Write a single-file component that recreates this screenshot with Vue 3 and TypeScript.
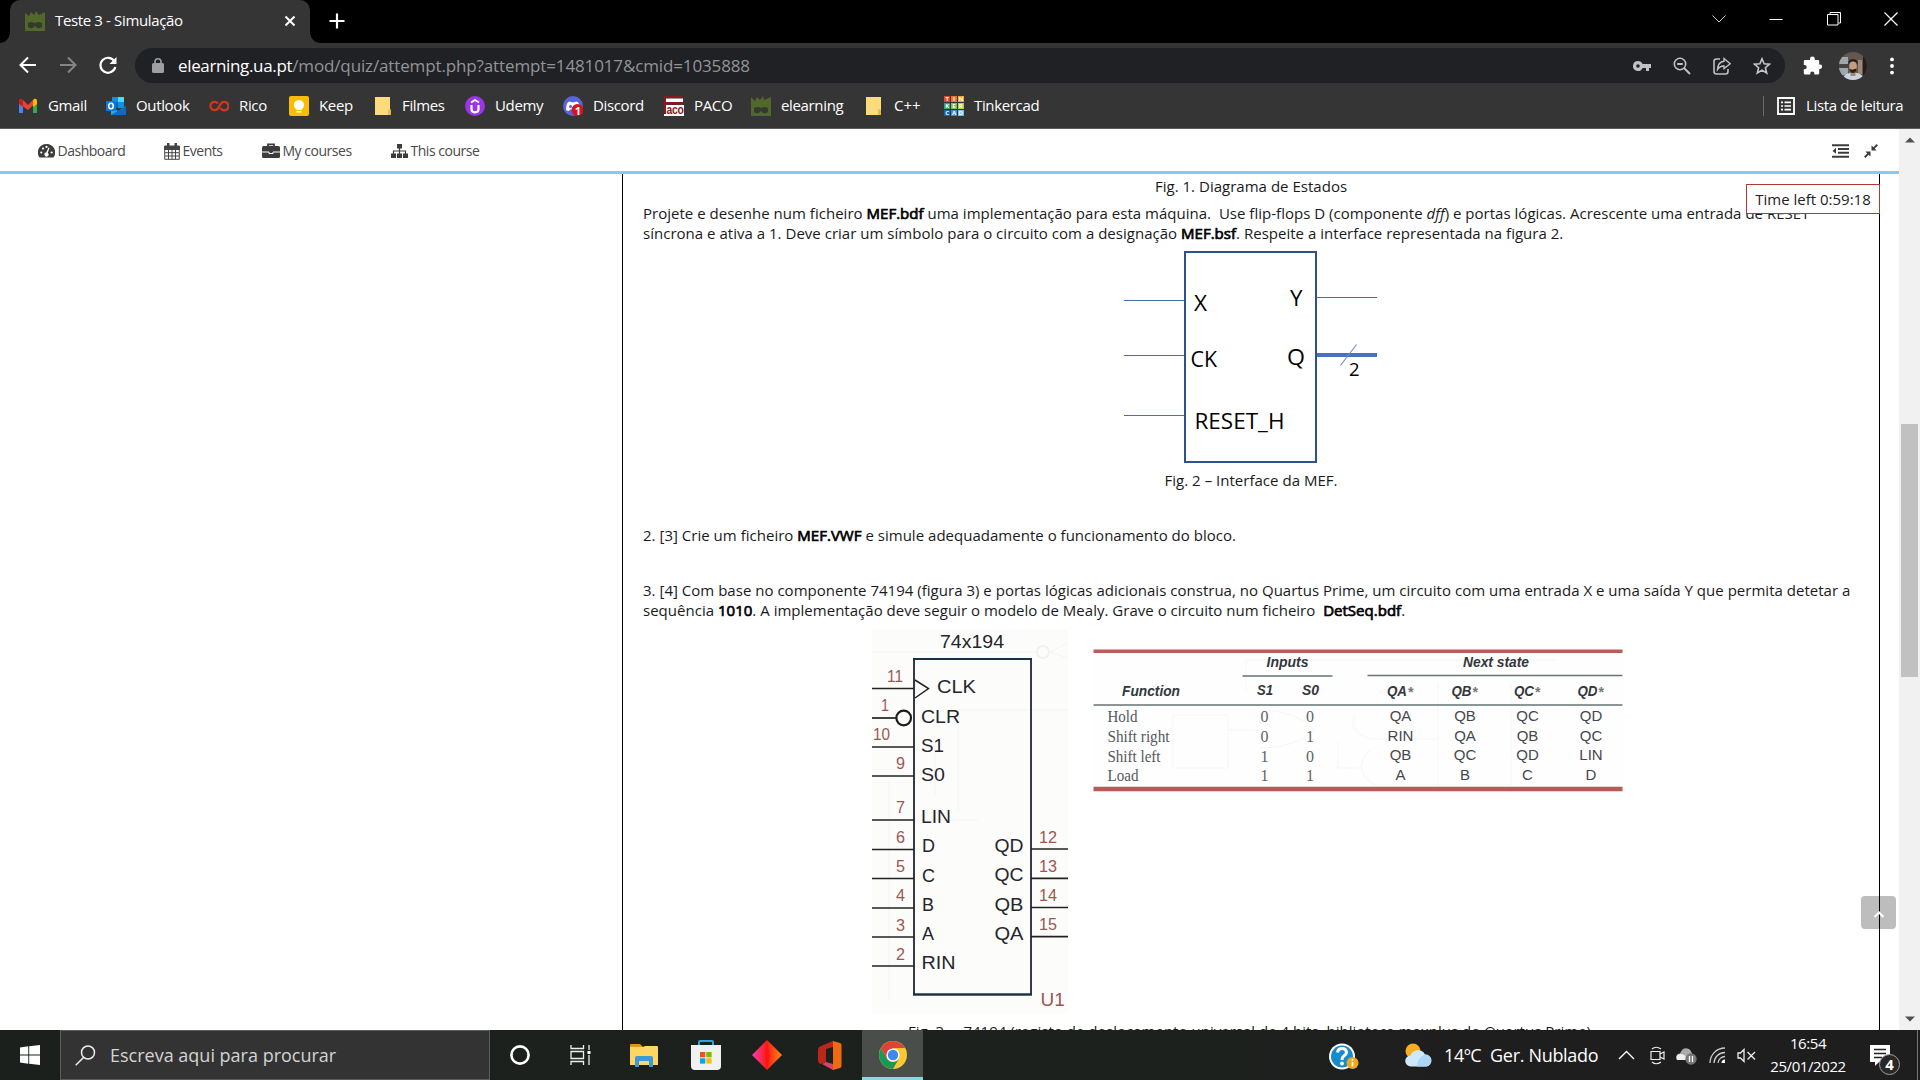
<script setup lang="ts">
interface Pin { n: string; nx: number; ny: number; y: number; label: string; lx: number; ly: number; lw: number; nw: number }

const leftPins: Pin[] = [
  { n: '11', nx: 887, ny: 681.5, nw: 16, y: 688.5, label: 'CLK', lx: 937, ly: 693, lw: 39 },
  { n: '1', nx: 881, ny: 711, nw: 8, y: 718, label: 'CLR', lx: 921, ly: 722.5, lw: 39 },
  { n: '10', nx: 873, ny: 740, nw: 17, y: 747, label: 'S1', lx: 921, ly: 751.5, lw: 23 },
  { n: '9', nx: 896, ny: 768.5, nw: 9, y: 776, label: 'S0', lx: 921, ly: 780.5, lw: 24 },
  { n: '7', nx: 896, ny: 813, nw: 9, y: 820, label: 'LIN', lx: 921, ly: 823, lw: 30 },
  { n: '6', nx: 896, ny: 842.5, nw: 9, y: 849.5, label: 'D', lx: 922, ly: 852, lw: 13 },
  { n: '5', nx: 896, ny: 872, nw: 9, y: 878.5, label: 'C', lx: 922, ly: 881.5, lw: 13 },
  { n: '4', nx: 896, ny: 901, nw: 9, y: 908, label: 'B', lx: 922, ly: 910.5, lw: 12 },
  { n: '3', nx: 896, ny: 930.5, nw: 9, y: 937, label: 'A', lx: 922, ly: 940, lw: 12 },
  { n: '2', nx: 896, ny: 959.5, nw: 9, y: 966, label: 'RIN', lx: 921.5, ly: 969, lw: 34 },
]
const rightPins = [
  { n: '12', y: 849, label: 'QD' },
  { n: '13', y: 878.3, label: 'QC' },
  { n: '14', y: 907.5, label: 'QB' },
  { n: '15', y: 936.7, label: 'QA' },
]
const rows = [
  { f: 'Hold', w: 30, s: ['0', '0'], q: ['QA', 'QB', 'QC', 'QD'], y: 722 },
  { f: 'Shift right', w: 62, s: ['0', '1'], q: ['RIN', 'QA', 'QB', 'QC'], y: 741.7 },
  { f: 'Shift left', w: 53, s: ['1', '0'], q: ['QB', 'QC', 'QD', 'LIN'], y: 761.5 },
  { f: 'Load', w: 31, s: ['1', '1'], q: ['A', 'B', 'C', 'D'], y: 781 },
]
const sx = [1264.5, 1310]
const qx = [1400.5, 1465, 1527.5, 1591]
const heads = ['QA', 'QB', 'QC', 'QD']
const tiles = [
  { c: '#e8452c', t: 'T' }, { c: '#f0772b', t: 'I' }, { c: '#f7a52b', t: 'N' },
  { c: '#2ba866', t: 'K' }, { c: '#7cc142', t: 'E' }, { c: '#b8d432', t: 'R' },
  { c: '#1565b0', t: 'C' }, { c: '#2f8fd8', t: 'A' }, { c: '#6cc0f0', t: 'D' },
]
</script>

<template>
  <div class="screen">
    <header class="tabs">
      <div class="tab">
        <svg class="fav" viewBox="0 0 20 20"><path d="M0 2L4 5 6 1 9 4 11 0 14 4 20 1V20H0Z" fill="#50692b" /><path d="M3 12Q6 10 10 12Q14 10 17 12V16Q13 19 10 15Q7 19 3 16Z" fill="#343b2c" /></svg>
        <span class="tab-title">Teste 3 - Simulação</span>
        <svg class="tab-x" viewBox="0 0 12 12"><path d="M1.500 1.500l9 9M10.500 1.500l-9 9" stroke="#fff" stroke-width="2" /></svg>
      </div>
      <svg class="plus" viewBox="0 0 16 16"><path d="M8 .5v15M.5 8h15" stroke="#fff" stroke-width="2.200" /></svg>
      <div class="win">
        <svg width="14" height="14" viewBox="0 0 14 14"><path d="M.5 3.500L7 10l6.500-6.500" fill="none" stroke="#ccc" /></svg>
        <svg width="14" height="14" viewBox="0 0 14 14"><path d="M.5 7.500h13" stroke="#fff" /></svg>
        <svg width="14" height="14" viewBox="0 0 14 14"><path d="M.5 2.500h10.500v10.500H.5zM3 2V.5h10.500V11H11.500" fill="none" stroke="#fff" /></svg>
        <svg width="14" height="14" viewBox="0 0 14 14"><path d="M.5.5l13 13M13.500.5l-13 13" stroke="#fff" stroke-width="1.200" /></svg>
      </div>
    </header>

    <div class="toolbar">
      <div class="navs">
        <svg width="18" height="18" viewBox="0 0 18 18"><path d="M17 9H2M9 1.500L1.500 9 9 16.500" fill="none" stroke="#fff" stroke-width="2" /></svg>
        <svg width="18" height="18" viewBox="0 0 18 18"><path d="M1 9h15M9 1.500L16.500 9 9 16.500" fill="none" stroke="#858585" stroke-width="2" /></svg>
        <svg width="18" height="18" viewBox="0 0 18 18"><path d="M15.500 5.500A7.500 7.500 0 1 0 16.300 11" fill="none" stroke="#fff" stroke-width="2.200" /><path d="M17.500 1v7h-7z" fill="#fff" /></svg>
      </div>
      <div class="omni">
        <svg class="lock" width="12" height="15" viewBox="0 0 12 15"><rect y="5" width="12" height="10" rx="1.500" fill="#9aa0a6" /><path d="M3 6V3.800a3 3 0 0 1 6 0V6" fill="none" stroke="#9aa0a6" stroke-width="1.600" /></svg>
        <span class="url"><b>elearning.ua.pt</b>/mod/quiz/attempt.php?attempt=1481017&amp;cmid=1035888</span>
        <div class="omni-icons">
          <svg width="18" height="18" viewBox="0 0 18 18"><path d="M5 4a5 5 0 1 0 4.600 7H13v3h3v-3h2V7H9.600A5 5 0 0 0 5 4zm0 3.200a1.800 1.800 0 1 1 0 3.600 1.800 1.800 0 0 1 0-3.600z" fill="#bfc1c3" /></svg>
          <svg width="18" height="18" viewBox="0 0 18 18"><circle cx="7" cy="7" r="5.700" fill="none" stroke="#bfc1c3" stroke-width="1.600" /><path d="M4.200 7h5.600M11 11l6 6" stroke="#bfc1c3" stroke-width="1.900" /></svg>
          <svg width="18" height="18" viewBox="0 0 18 18"><path d="M7 2H3.500Q1 2 1 4.500v10Q1 17 3.500 17h9q2.500 0 2.500-2.500V12" fill="none" stroke="#bfc1c3" stroke-width="1.600" /><path d="M11 1.500l6.200 5.200L11 11.500V9Q7 8.800 4.500 12.500 5 5 11 4.300z" fill="none" stroke="#bfc1c3" stroke-width="1.400" /></svg>
          <svg width="18" height="18" viewBox="0 0 18 18"><path d="M9 1.800l2.100 5 5.400.4-4.100 3.500 1.300 5.300L9 13.100 4.300 16l1.300-5.300L1.500 7.200l5.400-.4z" fill="none" stroke="#c4c6c8" stroke-width="1.600" /></svg>
        </div>
      </div>
      <svg class="puzzle" width="19" height="19" viewBox="0 0 19 19"><path d="M7 3a2.400 2.400 0 0 1 4.800 0v1H15a1.200 1.200 0 0 1 1.200 1.200V8.400h.6a2.300 2.300 0 0 1 0 4.600h-.6v4.300A1.200 1.200 0 0 1 15 18.500h-3.600v-.8a2.100 2.100 0 0 0-4.200 0v.8H2A1.200 1.200 0 0 1 .8 17.300v-4h.7a2.200 2.200 0 0 0 0-4.400H.8V5.200A1.200 1.200 0 0 1 2 4h5z" fill="#fff" /></svg>
      <svg class="avatar" width="28" height="28" viewBox="0 0 28 28"><defs><clipPath id="av"><circle cx="14" cy="14" r="14" /></clipPath></defs><g clip-path="url(#av)"><path d="M0 0h28v28H0z" fill="#625751" /><path d="M0 5h9v18H0z" fill="#9ca8ac" /><path d="M0 12h10v4H0z" fill="#45433f" /><path d="M19 8h4v14h-4z" fill="#9e8874" /><path d="M24 0h4v28h-4z" fill="#251d19" /><path d="M4 28q0-6 7-7h7q6 1 7 7z" fill="#cbd3df" /><path d="M11.500 17h5v7h-5z" fill="#a98370" /><ellipse cx="14" cy="14.500" rx="3.800" ry="6" fill="#c79c83" /><path d="M9.500 13q-1-6 4.500-6t4.500 6q-1-3.500-4.500-3.500t-4.500 3.500zM10.500 16.500q1.500 1.500 3.500 1t3.500-1q-.5 4.500-3.500 4.500t-3.500-4.500z" fill="#28201d" /></g></svg>
      <svg class="dots" width="4" height="18" viewBox="0 0 4 18"><g fill="#fff"><circle cx="2" cy="2.400" r="1.900" /><circle cx="2" cy="9" r="1.900" /><circle cx="2" cy="15.600" r="1.900" /></g></svg>
    </div>

    <div class="bookmarks">
      <div class="bm" style="--w: 88px"><svg viewBox="0 0 20 20"><path d="M1 17V5h4v12z" fill="#4285f4" /><path d="M15 17V5h4v12z" fill="#34a853" /><path d="M1 4.500l4-.5 5 5 5-5 2 3.500-7 6.500-9-6.500z" fill="#ea4335" /><path d="M15 4l1.500-1.200q2.500-.5 2.500 2V8l-4 3z" fill="#fbbc04" /><path d="M1 8V4.500Q1.500 2 4 3l1 1v7z" fill="#c5221f" /></svg><span>Gmail</span></div>
      <div class="bm" style="--w: 103px"><svg viewBox="0 0 20 20"><path d="M6 1h12v11H6z" fill="#1490df" /><path d="M12 1h6v5h-6z" fill="#50d9ff" /><path d="M6 6h6v6H6z" fill="#0364b8" /><path d="M5 10l7 5 8-5v9H5z" fill="#28a8ea" /><path d="M5 19l15-9v9z" fill="#1469b8" /><path d="M0 5h10v10H0z" fill="#0f78d4" /><ellipse cx="5" cy="10" rx="2.300" ry="2.800" fill="none" stroke="#fff" stroke-width="1.500" /></svg><span>Outlook</span></div>
      <div class="bm" style="--w: 80px"><svg viewBox="0 0 20 20"><path d="M9 7.500A4.200 4.200 0 1 0 9 12.500L12 7.500A4.200 4.200 0 1 1 11.500 12" fill="none" stroke="#d7351c" stroke-width="2.300" /></svg><span>Rico</span></div>
      <div class="bm" style="--w: 83px"><svg viewBox="0 0 20 20"><rect width="20" height="20" rx="2" fill="#fbbc04" /><path d="M10 4a5 5 0 0 0-2.700 9.200V14h5.400v-.8A5 5 0 0 0 10 4zM7.500 15h5v1.500h-5z" fill="#fff" /></svg><span>Keep</span></div>
      <div class="bm" style="--w: 93px"><svg viewBox="0 0 20 20"><path d="M3 1h15v12l1 1v5H3z" fill="#fbdb7b" /><path d="M16.500 13l2.500 1v5h-3z" fill="#e7b94b" /></svg><span>Filmes</span></div>
      <div class="bm" style="--w: 98px"><svg viewBox="0 0 20 20"><circle cx="10" cy="10" r="10" fill="#9b35e5" /><path d="M6.500 9v4q0 3.300 3.500 3.300t3.500-3.300V9" fill="none" stroke="#fff" stroke-width="2.200" /><path d="M6 6.500L10 4l4 2.500" fill="none" stroke="#fff" stroke-width="1.900" /></svg><span>Udemy</span></div>
      <div class="bm" style="--w: 101px"><svg viewBox="0 0 20 20"><circle cx="10" cy="10" r="10" fill="#5865d8" /><path d="M3 14Q3 6 6.500 5.500L10 6.500l3.500-1Q17 6 17 14q-2 1-3 1l-1-1.500H7L6 15q-2 0-3-1z" fill="#fff" /><circle cx="7.500" cy="10.500" r="1.500" fill="#5865d8" /><circle cx="14.500" cy="14" r="6" fill="#d3161b" /><text x="11.700" y="18.500" class="badge1">1</text></svg><span>Discord</span></div>
      <div class="bm" style="--w: 87px"><svg viewBox="0 0 20 20"><path d="M0 0h19v2H2v4h17v2.500H0z" fill="#8e1620" /><path d="M2 2.500h17V6H2z" fill="#fff" /><path d="M2 9h18v11H0v-2h2z" fill="#fff" /><path d="M0 8h2v10H0z" fill="#8e1620" /><text x="2.500" y="17.800" textLength="17" lengthAdjust="spacingAndGlyphs" class="aco">aco</text></svg><span>PACO</span></div>
      <div class="bm" style="--w: 110px"><svg viewBox="0 0 20 20"><path d="M0 1l4 4 2-4 3 3 3-4 1 4 7-3v19H0Z" fill="#50692b" /><path d="M3 12Q6 10 10 12Q14 10 17 12V16Q13 19 10 15Q7 19 3 16Z" fill="#343b2c" /></svg><span>elearning</span></div>
      <div class="bm" style="--w: 83px"><svg viewBox="0 0 20 20"><path d="M5 1h15v12l.5 1v5H5z" fill="#fbdb7b" /><path d="M17 13l3 1v5h-3z" fill="#e7b94b" /></svg><span class="cpp">C++</span></div>
      <div class="bm" style="--w: 110px"><div class="tiles"><i v-for="t in tiles" :key="t.t" :style="{ background: t.c }">{{ t.t }}</i></div><span>Tinkercad</span></div>
      <div class="reading">
        <svg width="18" height="18" viewBox="0 0 18 18"><path d="M1 1h16v16H1z" fill="none" stroke="#fff" stroke-width="1.800" /><path d="M4 5.300h2M4 9h2M4 12.700h2M7.500 5.300H14M7.500 9H14M7.500 12.700H14" stroke="#fff" stroke-width="1.700" /></svg>
        <span>Lista de leitura</span>
      </div>
    </div>

    <main class="page">
      <div class="site">
        <nav class="moodle">
          <a style="--w: 126px"><svg width="17" height="16" viewBox="0 0 17 16"><path d="M8.500 1A8.500 8.500 0 0 0 1.500 14.500h14A8.500 8.500 0 0 0 8.500 1z" fill="#3c3c3c" /><g fill="#fff"><circle cx="3.300" cy="9.500" r="1.100" /><circle cx="5" cy="5.500" r="1.100" /><circle cx="8.500" cy="3.900" r="1.100" /><circle cx="13.700" cy="9.500" r="1.100" /><path d="M11.500 5L9.700 10a2 2 0 1 1-1.500-.4L10.500 4.600z" /></g></svg>Dashboard</a>
          <a style="--w: 98px"><svg width="16" height="17" viewBox="0 0 16 17"><path d="M.7 3h14.600v13.300H.7zM.7 6.500h14.600M4.500 6.500V16M8 6.500V16M11.500 6.500V16M1 9.700h14M1 13h14" fill="none" stroke="#444" /><path d="M0 3h16v3.500H0zM3 0h2.500v4H3zM10.500 0H13v4h-2.500z" fill="#444" /></svg>Events</a>
          <a style="--w: 129px"><svg width="18" height="16" viewBox="0 0 18 16"><path d="M6 3V1.300h6V3" fill="none" stroke="#3c3c3c" stroke-width="1.800" /><rect y="3" width="18" height="12" rx="1.500" fill="#3c3c3c" /><path d="M0 9h7v1.500h4V9h7" fill="none" stroke="#fff" stroke-width="1" /></svg>My courses</a>
          <a><svg width="17" height="16" viewBox="0 0 17 16"><path d="M6 1h5v4.500H6zM0 10.500h5V15H0zM6 10.500h5V15H6zM12 10.500h5V15h-5z" fill="#3c3c3c" /><path d="M8.500 5v6M2.500 11V8h12v3" fill="none" stroke="#3c3c3c" stroke-width="1.200" /></svg>This course</a>
          <div class="tools">
            <svg width="17" height="14" viewBox="0 0 17 14"><path d="M0 1.200h17M6 5h11M6 8.800h11M0 12.700h17" stroke="#3c3c3c" stroke-width="2" /><path d="M4 3.800v6L.5 6.900z" fill="#3c3c3c" /></svg>
            <svg width="14" height="14" viewBox="0 0 14 14"><path d="M7.500 6.500V1.500l2 1.800L12.500 0 14 1.500 10.700 4.500l1.800 2zM6.500 7.500v5l-2-1.800L1.500 14 0 12.500 3.300 9.500l-1.800-2z" fill="#3c3c3c" /></svg>
          </div>
        </nav>

        <section class="quiz">
          <p class="cap c1">Fig. 1. Diagrama de Estados</p>
          <p class="ln l1">Projete e desenhe num ficheiro <b>MEF.bdf</b> uma implementação para esta máquina.&nbsp; Use flip-flops D (componente <em>dff</em>) e portas lógicas. Acrescente uma entrada de RESET</p>
          <p class="ln l2">síncrona e ativa a 1. Deve criar um símbolo para o circuito com a designação <b>MEF.bsf</b>. Respeite a interface representada na figura 2.</p>
          <svg class="fsm" width="254" height="227" viewBox="1123 243 254 227">
            <path d="M1124 300.500h61M1124 355.500h61M1124 415.500h61M1317 297.500h60" stroke="#4a6ea8" />
            <path d="M1317 355h60" stroke="#4472c4" stroke-width="4" /><path d="M1340.500 365.500l16-21" stroke="#6c8bc6" stroke-width="1.100" />
            <rect x="1185" y="252" width="131" height="210" fill="#fff" stroke="#2f528f" stroke-width="2" />
            <g class="fsm-t">
              <text x="1194" y="311" textLength="13" lengthAdjust="spacingAndGlyphs">X</text>
              <text x="1190.500" y="367" textLength="26.500" lengthAdjust="spacingAndGlyphs">CK</text>
              <text x="1194.500" y="429" textLength="90" lengthAdjust="spacingAndGlyphs">RESET_H</text>
              <text x="1290" y="306" textLength="12.500" lengthAdjust="spacingAndGlyphs">Y</text>
              <text x="1287" y="365" textLength="18" lengthAdjust="spacingAndGlyphs">Q</text>
              <text x="1349" y="376" font-size="18.500">2</text>
            </g>
          </svg>
          <p class="cap c2">Fig. 2 – Interface da MEF.</p>
          <p class="ln l3">2. [3] Crie um ficheiro <b>MEF.VWF</b> e simule adequadamente o funcionamento do bloco.</p>
          <p class="ln l4">3. [4] Com base no componente 74194 (figura 3) e portas lógicas adicionais construa, no Quartus Prime, um circuito com uma entrada X e uma saída Y que permita detetar a</p>
          <p class="ln l5">sequência <b>1010</b>. A implementação deve seguir o modelo de Mealy. Grave o circuito num ficheiro&nbsp; <b>DetSeq.bdf</b>.</p>
          <div class="figs">
            <svg width="196" height="401" viewBox="872 620 196 401">
              <rect x="872" y="630" width="196" height="383" fill="#fcfdfb" />
              <path d="M872 652h165M1050 652l18-9M1050 652l18 6M958 710h110M873 820h105M889 780v220M935 735v60M958 720v90" fill="none" stroke="#f3f4f5" />
              <circle cx="1043" cy="652" r="6" fill="none" stroke="#f0f1f2" stroke-width="2" />
              <rect x="914" y="659" width="117" height="335.500" fill="none" stroke="#22272e" stroke-width="1.800" />
              <path d="M913 659h119M913 994.500h119" stroke="#123246" stroke-width="2" />
              <g class="num"><template v-for="p in leftPins" :key="p.n"><path :d="`M872 ${p.y}H${p.n === '1' ? 896 : 914}`" stroke="#222" stroke-width="1.700" /><text :x="p.nx" :y="p.ny" :textLength="p.nw" lengthAdjust="spacingAndGlyphs">{{ p.n }}</text></template>
                <template v-for="p in rightPins" :key="p.n"><path :d="`M1031 ${p.y}H1068`" stroke="#222" stroke-width="1.700" /><text x="1039" :y="p.y - 6.500" textLength="18" lengthAdjust="spacingAndGlyphs">{{ p.n }}</text></template>
              </g>
              <text x="1040.500" y="1005.500" class="u1">U1</text>
              <g class="lab"><text x="940" y="647.500" textLength="64" lengthAdjust="spacingAndGlyphs">74x194</text>
                <text v-for="p in leftPins" :key="p.label" :x="p.lx" :y="p.ly" :textLength="p.lw" lengthAdjust="spacingAndGlyphs">{{ p.label }}</text>
                <text v-for="p in rightPins" :key="p.label" x="994.500" :y="p.y + 3" textLength="29" lengthAdjust="spacingAndGlyphs">{{ p.label }}</text></g>
              <path d="M915 680l13.500 8.500L915 698" fill="none" stroke="#222" stroke-width="1.500" />
              <circle cx="903.700" cy="718" r="7.300" fill="#fdfefc" stroke="#1c1c1c" stroke-width="2.200" />
            </svg>
            <svg width="530" height="175" viewBox="1093 620 530 175">
              <rect x="1093" y="645" width="530" height="150" fill="#fdfefd" />
              <path d="M1173 715h55v53h-55zM1246 660v30M1228 730h30M1260 710q35 0 55 20-20 18-55 18M1338 742v26h20M1438 683v110M1511 683v110M1355 716q-8 14 15 23h68M1370 750q-20 20 5 35h135M1246 660h310" fill="none" stroke="#f5f6f6" />
              <path d="M1093.500 651.200h529" stroke="#b95f58" stroke-width="3.500" />
              <path d="M1093.500 789h529" stroke="#b55c56" stroke-width="4.500" />
              <path d="M1242.500 676h90M1367.500 675.500h255M1093.500 705h529" stroke="#667476" stroke-width="1.300" />
              <g class="th">
                <text x="1266.500" y="667" textLength="42" lengthAdjust="spacingAndGlyphs">Inputs</text>
                <text x="1463" y="667" textLength="66" lengthAdjust="spacingAndGlyphs">Next state</text>
                <text x="1122" y="696" textLength="58" lengthAdjust="spacingAndGlyphs">Function</text>
                <text x="1257" y="694.500" textLength="16" lengthAdjust="spacingAndGlyphs">S1</text>
                <text x="1302" y="694.500" textLength="17" lengthAdjust="spacingAndGlyphs">S0</text>
                <template v-for="(h, i) in heads" :key="h"><text :x="qx[i] - 13.500" y="695.500" textLength="20" lengthAdjust="spacingAndGlyphs">{{ h }}</text><text :x="qx[i] + 7" y="697" class="star">*</text></template>
              </g>
              <template v-for="r in rows" :key="r.f">
                <text x="1107.500" :y="r.y" class="fn" :textLength="r.w" lengthAdjust="spacingAndGlyphs">{{ r.f }}</text>
                <text v-for="(s, i) in r.s" :key="i" :x="sx[i]" :y="r.y" class="dg">{{ s }}</text>
                <text v-for="(q, i) in r.q" :key="q" :x="qx[i]" :y="r.y - 1.200" class="td">{{ q }}</text>
              </template>
            </svg>
          </div>
          <p class="cap c3">Fig. 3 –&nbsp; 74194 (registo de deslocamento universal de 4 bits, biblioteca maxplus do Quartus Prime)</p>
        </section>
        <div class="timer">Time left 0:59:18</div>
        <div class="top"><svg width="12" height="9" viewBox="0 0 12 9"><path d="M1.500 7L6 2.500 10.500 7" fill="none" stroke="#fff" stroke-width="2" /></svg></div>
      </div>
      <aside class="scroll">
        <svg width="10" height="6" viewBox="0 0 10 6"><path d="M0 5.500L5 .5l5 5z" fill="#505050" /></svg>
        <div class="thumb"></div>
        <svg width="10" height="6" viewBox="0 0 10 6"><path d="M0 .5h10l-5 5z" fill="#505050" /></svg>
      </aside>
    </main>

    <footer class="task">
      <div class="start"><svg width="20" height="20" viewBox="0 0 20 20"><path d="M0 2.500l8.300-1.200v8.200H0zM9.200 1.200L20 0v9.500H9.200zM0 10.500h8.300v8.300L0 17.500zM9.200 10.500H20V20L9.200 18.700z" fill="#fff" /></svg></div>
      <div class="search"><svg width="21" height="21" viewBox="0 0 21 21"><circle cx="13" cy="7.500" r="6.500" fill="none" stroke="#eee" stroke-width="1.500" /><path d="M8.500 12.500L.7 20.300" stroke="#eee" stroke-width="1.500" /></svg><span>Escreva aqui para procurar</span></div>
      <div class="app a1"><svg width="22" height="22" viewBox="0 0 22 22"><circle cx="11" cy="11" r="8.600" fill="none" stroke="#fff" stroke-width="2.600" /></svg></div>
      <div class="app a2"><svg width="21" height="20" viewBox="0 0 21 20"><path d="M1 0v3.500h12.500V0M1 6.500h12.500v7H1zM1 20v-3.500h12.500V20M19 0v5M19 10v10" fill="none" stroke="#eee" stroke-width="1.300" /><path d="M17.500 6h3v3h-3z" fill="#fff" /></svg></div>
      <div class="app a3"><svg width="28" height="24" viewBox="0 0 28 24"><path d="M0 2Q0 1 1 1h9l3 3H0z" fill="#d99a18" /><path d="M0 4h13l2-1h12q1 0 1 1v18H0z" fill="#fdd663" /><path d="M5 24V15q0-2 2-2h14q2 0 2 2v9h-4v-6H9v6z" fill="#3f97dc" /></svg></div>
      <div class="app a4"><svg width="30" height="30" viewBox="0 0 30 30"><path d="M8 6V2q0-1 1-1h12q1 0 1 1v4" fill="none" stroke="#2ea5d8" stroke-width="2" /><path d="M0 5h30v21q0 4-4 4H4q-4 0-4-4z" fill="#f1f1f2" /><path d="M9 12h5.300v5.300H9z" fill="#f25022" /><path d="M15.300 12h5.300v5.300h-5.300z" fill="#7fba00" /><path d="M9 18.300h5.300v5.300H9z" fill="#00a4ef" /><path d="M15.300 18.300h5.300v5.300h-5.300z" fill="#ffb900" /></svg></div>
      <div class="app a5"><svg width="30" height="30" viewBox="0 0 30 30"><defs><linearGradient id="dg"><stop offset="0" stop-color="#f53cb7" /><stop offset=".5" stop-color="#fa1d15" /><stop offset="1" stop-color="#ff8a13" /></linearGradient></defs><path d="M15 0l15 15-15 15L0 15z" fill="url(#dg)" /><path d="M15 0l3 15-3 15-2-15z" fill="#ff0a0a" opacity=".5" /></svg></div>
      <div class="app a6"><svg width="24" height="29" viewBox="0 0 24 29"><path d="M15 0l7 2q1.500.5 1.500 2v21q0 1.500-1.500 2l-7 2z" fill="#ef6a13" /><path d="M15 0v6L8 8v13l-5.500 2Q0 22 0 19V9q0-3 3-4z" fill="#bc261b" /><path d="M4 23l4-2 7 2v6z" fill="#d74467" /></svg></div>
      <div class="app chrome"><svg width="28" height="28" viewBox="0 0 28 28"><circle cx="14" cy="14" r="14" fill="#fcc934" /><path d="M14 7h12.100A14 14 0 0 0 1.900 7l6 10.500z" fill="#dc4437" /><path d="M1.900 7a14 14 0 0 0 12.100 21l6-10.500A7 7 0 0 1 7.900 17.500z" fill="#1e9655" /><circle cx="14" cy="14" r="6.600" fill="#fff" /><circle cx="14" cy="14" r="5.200" fill="#4285f4" /></svg></div>
      <div class="tray">
        <svg class="help" width="30" height="28" viewBox="0 0 30 28"><circle cx="13" cy="13.500" r="13" fill="#fff" /><circle cx="13" cy="13.500" r="11" fill="#168bcd" /><path d="M8.500 9.500q.5-4 4.500-4t4.500 3.500q0 2.300-2.600 4Q13 14.200 13 17" fill="none" stroke="#fff" stroke-width="3" /><circle cx="13" cy="20.500" r="1.900" fill="#fff" /><circle cx="23.500" cy="20" r="6" fill="#efa91f" /><path d="M23.500 16v1.800M23.500 19v4.500" stroke="#fff" stroke-width="1.600" /></svg>
        <svg class="wea" width="27" height="24" viewBox="0 0 27 24"><circle cx="8" cy="8" r="7.500" fill="#f6ad21" /><path d="M6 23.500a5.500 5.500 0 0 1-.5-11A8 8 0 0 1 20 11.500a6 6 0 0 1 1 12z" fill="#cfe8fb" /><path d="M12 23.500q0-9 8-12l2 .5a6 6 0 0 1-1 11.500z" fill="#abd7f7" /></svg>
        <span class="temp">14ºC&nbsp; Ger. Nublado</span>
        <svg class="t1" width="17" height="10" viewBox="0 0 17 10"><path d="M1 9l7.500-7.500L16 9" fill="none" stroke="#fff" stroke-width="1.400" /></svg>
        <svg class="t2" width="15" height="19" viewBox="0 0 15 19"><path d="M1 5.500h9v8H1zM10 8l4-2v7l-4-2M2 3q4-3.500 9 0M2 16q4 3.500 9 0" fill="none" stroke="#eee" stroke-width="1.200" /></svg>
        <svg class="t3" width="21" height="19" viewBox="0 0 21 19"><path d="M1 14Q-1 8 4 7.500 7 0 13 3q4 3 3.500 11z" fill="#aaa" /><path d="M1 14q-2-5 3-6 5-1 8 6z" fill="#eee" /><circle cx="15" cy="13" r="5.700" fill="#777" /><path d="M13.500 10v6M16.500 10v6" stroke="#fff" stroke-width="1.300" /></svg>
        <svg class="t4" width="17" height="17" viewBox="0 0 17 17"><path d="M1 16A15 15 0 0 1 16 1M5 16A11 11 0 0 1 16 5.500M9 16a7 7 0 0 1 7-6.500" fill="none" stroke="#ccc" stroke-width="1.300" /><path d="M12.500 16a3.500 3.500 0 0 1 3.500-3.500V16z" fill="#fff" /></svg>
        <svg class="t5" width="19" height="15" viewBox="0 0 19 15"><path d="M1 5h2.500L7 1.500v12L3.500 10H1zM10.500 4l7.500 7.500M18 4l-7.500 7.500" fill="none" stroke="#eee" stroke-width="1.300" /></svg>
        <div class="clock"><span>16:54</span><span>25/01/2022</span></div>
        <svg class="note" width="31" height="32" viewBox="0 0 31 32"><path d="M0 0h20v17H9l-4 4v-4H0z" fill="#fff" /><path d="M4 4.500h12M4 8.500h12M4 12.500h8" stroke="#222" stroke-width="1.300" /><circle cx="19.500" cy="19.500" r="10" fill="#282828" stroke="#a0a0a0" stroke-width="1" /><text x="19.500" y="25" class="n4">4</text></svg>
        <div class="peek"></div>
      </div>
    </footer>
  </div>
</template>

<style>
body { margin: 0; overflow: hidden; }
</style>
<style scoped>
* { box-sizing: border-box; }
.screen { width: 1920px; height: 1080px; overflow: hidden; display: flex; flex-direction: column; font-family: "Open Sans", "Noto Sans", sans-serif; background: #fff; }
svg { display: block; flex: none; }
p { margin: 0; }
.tabs { height: 43px; background: #000; display: flex; align-items: center; padding-left: 10px; flex: none; }
.tab { width: 300px; height: 43px; background: #353535; border-radius: 10px 10px 0 0; display: flex; align-items: center; padding: 0 14px 2px 15px; position: relative; }
.tab::before, .tab::after { content: ""; position: absolute; bottom: 0; width: 10px; height: 10px; }
.tab::before { left: -10px; background: radial-gradient(circle at 0 0, transparent 9.500px, #353535 10px); }
.tab::after { right: -10px; background: radial-gradient(circle at 100% 0, transparent 9.500px, #353535 10px); }
.fav { width: 20px; height: 20px; }
.tab-title { font-size: 15px; color: #fff; margin: 0 0 2px 10px; flex: 1; letter-spacing: -0.360px; white-space: nowrap; }
.tab-x { width: 12px; height: 12px; }
.plus { width: 16px; height: 16px; margin: 0 0 1px 19px; }
.win { margin-left: auto; display: flex; gap: 43.300px; padding-right: 22px; margin-top: -6px; }
.toolbar { height: 45px; flex: none; background: #353535; display: flex; align-items: center; }
.navs { width: 135px; display: flex; gap: 22px; padding: 0 0 1px 19px; }
.omni { width: 1650px; height: 35px; border-radius: 18px; background: #202124; display: flex; align-items: center; padding-left: 17px; }
.lock { margin-right: 14px; }
.url { font-size: 17px; letter-spacing: -0.130px; color: #929598; white-space: nowrap; margin-bottom: 1px; }
.url b { font-weight: 400; color: #fff; letter-spacing: -0.350px; }
.omni-icons { margin-left: auto; display: flex; gap: 22px; padding-right: 14px; }
.puzzle { margin-left: 18px; }
.avatar { margin-left: 17px; }
.dots { margin-left: 23px; }
.bookmarks { height: 41px; flex: none; background: #353535; border-bottom: 1px solid #5c5c5c; display: flex; align-items: flex-start; padding: 8px 0 0 18px; color: #fff; font-size: 15px; letter-spacing: -0.350px; }
.bm { width: var(--w); flex: none; height: 20px; line-height: 20px; display: flex; align-items: center; gap: 10px; white-space: nowrap; }
.bm > svg { width: 20px; height: 20px; }
.bm > span, .reading > span { margin-bottom: 2px; }
.cpp { margin-left: 3px; letter-spacing: 0; }
.badge1 { font: 700 11px "Open Sans", sans-serif; fill: #fff; }
.aco { font: 700 12px "Liberation Sans", sans-serif; fill: #8e1620; }
.tiles { width: 20px; height: 20px; display: grid; grid-template-columns: repeat(3, 1fr); grid-template-rows: repeat(3, 1fr); gap: 0.500px; }
.tiles i { font: 700 6px/6px "Open Sans", sans-serif; color: #fff; text-align: center; letter-spacing: 0; min-height: 0; }
.reading { margin-left: auto; width: 157px; height: 20px; border-left: 1px solid #6a6a6a; display: flex; align-items: center; padding-left: 13px; gap: 11px; white-space: nowrap; }
.page { height: 901px; flex: none; display: flex; }
.site { width: 1899px; position: relative; overflow: hidden; }
.moodle { height: 45px; border-bottom: 3px solid #87c9f0; display: flex; align-items: center; padding: 0 21px 0 38px; color: #4a4a4a; font-size: 14px; letter-spacing: -0.480px; }
.moodle a { display: flex; align-items: center; gap: 2.500px; width: var(--w, auto); white-space: nowrap; }
.moodle a svg { margin-top: 2px; }
.tools { margin-left: auto; display: flex; gap: 15px; margin-top: 2px; }
.quiz { margin-left: 622px; width: 1258px; height: 856px; border: solid #000; border-width: 0 1px; padding: 2px 0 0 20px; display: flex; flex-direction: column; color: #1a1a1a; font-size: 15px; line-height: 20px; letter-spacing: 0.019px; white-space: nowrap; }
.quiz p { height: 20px; flex: none; }
.quiz b { font-weight: 400; color: #000; -webkit-text-stroke: 0.700px #000; }
.quiz svg { letter-spacing: 0; }
.cap { width: 1216px; text-align: center; }
.l1 { margin-top: 7px; }
.l3 { margin-top: 35px; }
.l4 { margin-top: 35px; }
.fsm { margin-left: 480px; }
.fsm-t { font-family: "Open Sans", sans-serif; font-size: 22.500px; fill: #000; }
.figs { display: flex; gap: 25px; padding-left: 229px; align-items: flex-start; height: 401px; flex: none; }
.c3 { width: 1213px; }
.num { font: 16.500px "Liberation Sans", sans-serif; fill: #9c5652; }
.u1 { font: 19px "Liberation Sans", sans-serif; fill: #9c5652; }
.lab { font: 19px "Liberation Sans", sans-serif; fill: #25252b; }
.th { font: italic 700 14px "Liberation Sans", sans-serif; fill: #33373c; }
.star { font-size: 14px; fill: #777; }
.fn { font: 16px "Liberation Serif", serif; fill: #55585c; }
.dg { font: 16px "Liberation Serif", serif; fill: #606367; text-anchor: middle; }
.td { font: 15px "Liberation Sans", sans-serif; fill: #45484d; text-anchor: middle; }
.timer { position: absolute; left: 1746px; top: 55px; width: 134px; height: 30px; border: 1px solid #b03a30; background: #fff; color: #222; font-size: 15px; line-height: 29px; text-align: center; white-space: nowrap; }
.top { position: absolute; left: 1861px; top: 767px; width: 35px; height: 33px; border-radius: 4px; background: rgba(0, 0, 0, 0.260); display: flex; align-items: center; justify-content: center; padding-top: 3px; }
.scroll { width: 21px; background: #f1f1f1; display: flex; flex-direction: column; align-items: center; padding: 8px 0; }
.thumb { width: 17px; height: 253px; margin: 281px 0 auto; background: #c1c1c1; }
.task { height: 50px; flex: none; background: linear-gradient(90deg, #1b201c 0, #1c211d 60%, #1e1e1e 75%); display: flex; align-items: center; color: #fff; }
.start { width: 60px; padding-left: 20px; }
.search { width: 430px; height: 50px; background: #333; border: 1px solid #5b5b5b; display: flex; align-items: center; padding-left: 14px; color: #d4d4d4; font-size: 18px; }
.search span { margin-left: 14px; white-space: nowrap; }
.app { height: 50px; width: 62px; display: flex; align-items: center; justify-content: center; flex: none; }
.a1, .a2 { width: 60px; }
.a3 { width: 67px; }
.a4 { width: 57px; }
.a5 { width: 66px; }
.a6 { width: 62px; padding-right: 2px; }
.chrome { width: 61px; background: #4a4e4b; border-bottom: 3px solid #83dbe2; padding-top: 2px; }
.tray { margin-left: auto; width: 591px; height: 50px; display: flex; align-items: center; flex: none; }
.help { margin-right: 46px; margin-top: 3px; }
.wea { margin-right: 12px; }
.temp { font-size: 18px; letter-spacing: -0.320px; width: 162px; white-space: nowrap; margin-right: 12px; }
.t1 { margin-right: 15px; }
.t2 { margin-right: 11px; }
.t3 { margin-right: 12px; }
.t4 { margin-right: 11px; }
.t5 { margin-right: 11px; }
.clock { width: 82px; display: flex; flex-direction: column; align-items: center; font-size: 15px; line-height: 23px; letter-spacing: -0.420px; margin: 0 21px 1px 0; white-space: nowrap; }
.note { margin-top: 12px; }
.n4 { font: 700 15px "Open Sans", sans-serif; fill: #fff; text-anchor: middle; }
.peek { width: 1px; height: 50px; background: #777; margin-left: 16px; }
</style>
